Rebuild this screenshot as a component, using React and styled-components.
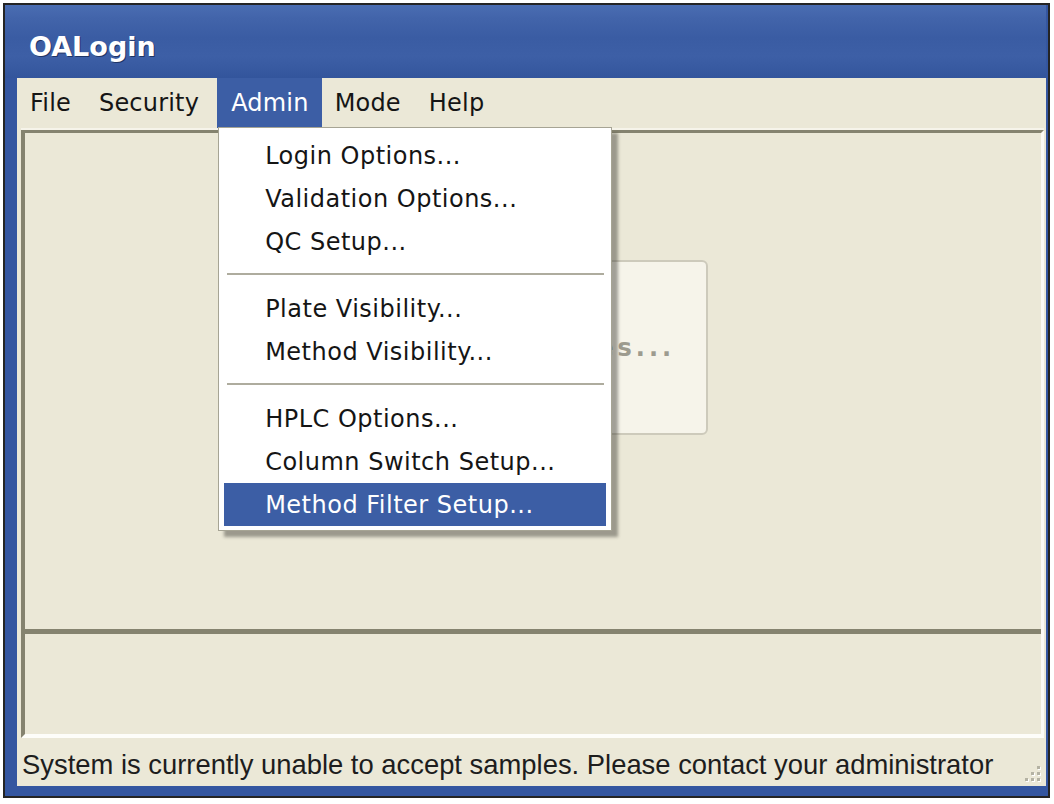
import React from 'react';
import styled, { createGlobalStyle } from 'styled-components';

const GlobalStyle = createGlobalStyle`
	html,
	body {
		margin: 0;
		padding: 0;
		background: #ffffff;
	}

	body {
		font-family: "DejaVu Sans", Verdana, sans-serif;
		color: #151515;
	}
`;

const beige = '#ebe8d7';
const shade = '#85836f';
const selected = '#3c5ea5';

const Page = styled.div`
	width: 1054px;
	height: 804px;
	box-sizing: border-box;
	padding: 3px 0 0 3px;
	overflow: hidden;
`;

const Window = styled.div`
	width: 1047px;
	height: 795px;
	box-sizing: border-box;
	display: flex;
	flex-direction: column;
	border: 2px solid #242424;
	padding: 0 2px 10px 0;
	background: #3456a0;
`;

const TitleBar = styled.div`
	height: 73px;
	flex: none;
	display: flex;
	align-items: center;
	padding: 10px 0 0 24px;
	box-sizing: border-box;
	background: linear-gradient(
		180deg,
		#4a6db2 0%,
		#4264aa 18%,
		#3a5ca3 45%,
		#3d5fa6 70%,
		#33559c 100%
	);
	color: #ffffff;
	font-size: 27px;
	font-weight: 700;
	text-shadow: 1px 1px 0 #1f3566;
`;

const Client = styled.div`
	flex: 1;
	margin-left: 12px;
	display: flex;
	flex-direction: column;
	background: ${beige};
	min-height: 0;
`;

const MenuBar = styled.div`
	height: 50px;
	flex: none;
	display: flex;
	align-items: stretch;
	font-size: 24px;
	letter-spacing: 0.2px;
`;

const MenuItem = styled.div`
	position: relative;
	display: flex;
	align-items: center;
	margin-left: ${(p) => (p.$open ? '3px' : '0')};
	padding: ${(p) => (p.$open ? '0 13px 0 14px' : '0 15px 0 13px')};
	background: ${(p) => (p.$open ? selected : 'transparent')};
	color: ${(p) => (p.$open ? '#ffffff' : '#151515')};
`;

const Dropdown = styled.div`
	position: absolute;
	top: 49px;
	left: 1px;
	z-index: 10;
	width: 394px;
	box-sizing: border-box;
	padding: 6px 5px 4px;
	border: 1px solid #a6a494;
	background: #ffffff;
	box-shadow: 6px 6px 3px rgba(60, 58, 50, 0.45);
	color: #151515;
	letter-spacing: 0.5px;
`;

const DropItem = styled.div`
	height: 43px;
	display: flex;
	align-items: center;
	padding-left: 41px;
	background: ${(p) => (p.$active ? selected : 'transparent')};
	color: ${(p) => (p.$active ? '#ffffff' : '#151515')};
	white-space: nowrap;
`;

const Separator = styled.div`
	height: 2px;
	margin: 10px 2px 12px 3px;
	background: #aeac9e;
`;

const Frame = styled.div`
	flex: 1;
	display: flex;
	flex-direction: column;
	margin: 2px 2px 0 4px;
	border-top: 3px solid ${shade};
	border-left: 4px solid ${shade};
	border-right: 3px solid #fbfaf5;
	border-bottom: 4px solid #fdfdf9;
	box-shadow: 0 -2px 0 #f6f4ea;
	min-height: 0;
`;

const MainArea = styled.div`
	flex: 1;
	display: flex;
	justify-content: center;
	align-items: flex-start;
	padding-top: 127px;
`;

const BigButton = styled.div`
	width: 350px;
	height: 175px;
	box-sizing: border-box;
	display: flex;
	align-items: center;
	justify-content: center;
	padding-right: 30px;
	border: 2px solid #cdcabb;
	border-radius: 6px;
	background: #f6f4ea;
	color: #9d9b8f;
	font-size: 24px;
	font-weight: 700;
	letter-spacing: 4px;
	white-space: nowrap;
	overflow: hidden;
`;

const LowerPanel = styled.div`
	height: 100px;
	flex: none;
	border-top: 5px solid ${shade};
`;

const StatusBar = styled.div`
	height: 48px;
	flex: none;
	display: flex;
	align-items: center;
	padding: 6px 3px 0 5px;
	box-sizing: border-box;
	font-family: "Liberation Sans", Arial, sans-serif;
	font-size: 27.4px;
	color: #1d1d1d;
	white-space: nowrap;
`;

const Grip = styled.svg`
	margin-left: auto;
	align-self: flex-end;
	margin-bottom: 2px;
	flex: none;
`;

const adminItems = [
	['Login Options...', 'Validation Options...', 'QC Setup...'],
	['Plate Visibility...', 'Method Visibility...'],
	['HPLC Options...', 'Column Switch Setup...', 'Method Filter Setup...'],
];

function SizeGrip() {
	const dots = [
		[18, 2],
		[12, 8],
		[18, 8],
		[6, 14],
		[12, 14],
		[18, 14],
	];
	return (
		<Grip width="24" height="20" viewBox="0 0 24 20">
			{dots.map(([x, y]) => (
				<g key={`${x}-${y}`}>
					<rect x={x + 1} y={y + 1} width="3" height="3" fill="#ffffff" />
					<rect x={x} y={y} width="3" height="3" fill="#b4b2a3" />
				</g>
			))}
		</Grip>
	);
}

export default function App() {
	return (
		<Page>
			<GlobalStyle />
			<Window>
				<TitleBar>OALogin</TitleBar>
				<Client>
					<MenuBar>
						<MenuItem>File</MenuItem>
						<MenuItem>Security</MenuItem>
						<MenuItem $open>
							Admin
							<Dropdown>
								{adminItems.map((group, gi) => (
									<React.Fragment key={gi}>
										{gi > 0 && <Separator />}
										{group.map((label) => (
											<DropItem key={label} $active={label === 'Method Filter Setup...'}>
												{label}
											</DropItem>
										))}
									</React.Fragment>
								))}
							</Dropdown>
						</MenuItem>
						<MenuItem>Mode</MenuItem>
						<MenuItem>Help</MenuItem>
					</MenuBar>
					<Frame>
						<MainArea>
							<BigButton>Submit Samples...</BigButton>
						</MainArea>
						<LowerPanel />
					</Frame>
					<StatusBar>
						System is currently unable to accept samples. Please contact your administrator
						<SizeGrip />
					</StatusBar>
				</Client>
			</Window>
		</Page>
	);
}
